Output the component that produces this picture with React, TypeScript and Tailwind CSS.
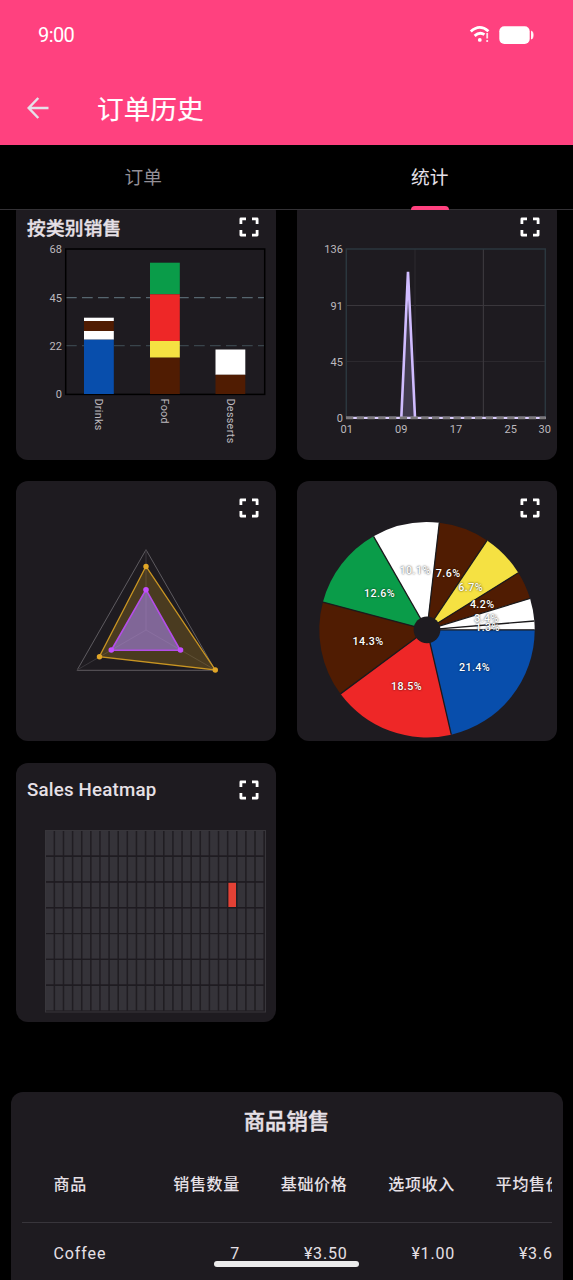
import type { ReactNode } from "react";
import clsx from "clsx";

const BROWN = "#501c02";
const YELLOW = "#f5e142";
const RED = "#ee2727";
const GREEN = "#0a9c49";
const BLUE = "#084eac";
const SURFACE = "#1e1b20";

type Segment = { top: number; bottom: number; color: string };

const bars: { label: string; x: number; segments: Segment[] }[] = [
  {
    label: "Drinks",
    x: 68,
    segments: [
      { top: 117.7, bottom: 121, color: "#fff" },
      { top: 121, bottom: 131, color: BROWN },
      { top: 131, bottom: 139.7, color: "#fff" },
      { top: 139.7, bottom: 194, color: BLUE },
    ],
  },
  {
    label: "Food",
    x: 134,
    segments: [
      { top: 62.7, bottom: 94.3, color: GREEN },
      { top: 94.3, bottom: 141, color: RED },
      { top: 141, bottom: 157.7, color: YELLOW },
      { top: 157.7, bottom: 194, color: BROWN },
    ],
  },
  {
    label: "Desserts",
    x: 199.5,
    segments: [
      { top: 149.5, bottom: 174.8, color: "#fff" },
      { top: 174.8, bottom: 194, color: BROWN },
    ],
  },
];

const slices = [
  { value: 21.4, color: BLUE },
  { value: 18.5, color: RED },
  { value: 14.3, color: BROWN },
  { value: 12.6, color: GREEN },
  { value: 10.1, color: "#fff" },
  { value: 7.6, color: BROWN },
  { value: 6.7, color: YELLOW },
  { value: 4.2, color: BROWN },
  { value: 3.4, color: "#fff" },
  { value: 1.3, color: "#fff" },
];

const columns = ["销售数量", "基础价格", "选项收入", "平均售价"];
const rows = [{ name: "Coffee", cells: ["7", "¥3.50", "¥1.00", "¥3.64"] }];

function FullscreenIcon() {
  return (
    <svg
      className="h-5 w-5 shrink-0"
      viewBox="0 0 20 20"
      fill="none"
      stroke="#fff"
      strokeWidth="2.8"
      strokeLinejoin="round"
    >
      <path d="M1.9 7V1.9H7M13 1.9h5.1V7M18.1 13v5.1H13M7 18.1H1.9V13" />
    </svg>
  );
}

function ChartCard({ title, titleClassName, children }: {
  title?: string;
  titleClassName?: string;
  children: ReactNode;
}) {
  return (
    <section className="relative h-[259.6px] rounded-xl bg-[#1e1b20]">
      <svg className="absolute inset-0" width="260" height="260" viewBox="0 0 260 260">
        {children}
      </svg>
      <div className="relative flex items-start justify-between pt-[17px] pr-[17px] pl-[11px]">
        <h2
          className={clsx(
            "text-[18.7px] leading-5 font-medium tracking-[0.2px] text-[#e6e0e6]",
            titleClassName,
          )}
        >
          {title}
        </h2>
        <FullscreenIcon />
      </div>
    </section>
  );
}

function AxisLabel({ x, y, anchor = "end", children }: {
  x: number;
  y: number;
  anchor?: "end" | "middle";
  children: ReactNode;
}) {
  return (
    <text x={x} y={y + 4} textAnchor={anchor} className="fill-[#bdb9be] text-[11px] tracking-[0.1px]">
      {children}
    </text>
  );
}

function CategoryChart() {
  return (
    <>
      <path d="M50 97.7H249" stroke="#56666f" strokeWidth="1.2" strokeDasharray="10.7 5.3" />
      <path d="M50 145.7H249" stroke="#39444b" strokeWidth="1.2" strokeDasharray="10.7 5.3" />
      <rect x="49.7" y="49" width="199" height="145.4" fill="none" stroke="#000" strokeWidth="1.5" />
      {bars.map((bar) => (
        <g key={bar.label}>
          {bar.segments.map((s) => (
            <rect key={s.top} x={bar.x} y={s.top} width="29.8" height={s.bottom - s.top} fill={s.color} />
          ))}
          <text
            transform={`translate(${bar.x + 11} 198.5) rotate(90)`}
            className="fill-[#bdb9be] text-[10.7px] tracking-[0.35px]"
          >
            {bar.label}
          </text>
        </g>
      ))}
      <AxisLabel x={46} y={49}>68</AxisLabel>
      <AxisLabel x={46} y={97.5}>45</AxisLabel>
      <AxisLabel x={46} y={145.5}>22</AxisLabel>
      <AxisLabel x={46} y={193.5}>0</AxisLabel>
    </>
  );
}

function DailyChart() {
  return (
    <>
      <g stroke="#3a373c" strokeWidth="1.2">
        <path d="M49 105.5H248" />
        <path d="M49 161.5H248" stroke="#2c292e" />
        <path d="M118 49V218" stroke="#2b292d" />
        <path d="M186.4 49V218" />
      </g>
      <rect x="49.3" y="49" width="199" height="168.7" fill="none" stroke="#2b373e" strokeWidth="1.5" />
      <path d="M104.3 217.7 111 71.7l7 146Z" fill="#403a4d" />
      <path
        d="M104.3 217.7L111 71.8l7 145.9"
        fill="none"
        stroke="#d0bcff"
        strokeWidth="2.6"
        strokeLinejoin="bevel"
      />
      {/* zero line: grey axis with the series showing through the gaps */}
      <path d="M49 217.8H248.7" stroke="#dccdff" strokeWidth="2.2" />
      <path d="M49 217.8H248.7" stroke="#7b787a" strokeWidth="2.8" strokeDasharray="7.3 3.45" />
      <AxisLabel x={46} y={49}>136</AxisLabel>
      <AxisLabel x={46} y={105.5}>91</AxisLabel>
      <AxisLabel x={46} y={161.5}>45</AxisLabel>
      <AxisLabel x={46} y={217.5}>0</AxisLabel>
      <AxisLabel x={49.7} y={229.3} anchor="middle">01</AxisLabel>
      <AxisLabel x={104.3} y={229.3} anchor="middle">09</AxisLabel>
      <AxisLabel x={159} y={229.3} anchor="middle">17</AxisLabel>
      <AxisLabel x={213.7} y={229.3} anchor="middle">25</AxisLabel>
      <AxisLabel x={247.8} y={229.3} anchor="middle">30</AxisLabel>
    </>
  );
}

function RadarChart() {
  return (
    <>
      <path d="M130 68.7 199.3 189.3H61Z" fill="none" stroke="#5e5b60" />
      <path d="M130 149V69M130 149l69.3 40M130 149l-69 40" stroke="#3a373c" />
      <path d="M130 85.3 199.3 189 83.3 175.7Z" fill="#daa520" fillOpacity="0.24" stroke="#c99522" strokeWidth="1.3" />
      <path d="M130 108.7 164.3 169.3H95.3Z" fill="#a584e8" fillOpacity="0.6" stroke="#b44de8" strokeWidth="1.6" />
      <g fill="#e0a526">
        <circle cx="130" cy="85.5" r="2.7" />
        <circle cx="199.3" cy="189" r="2.7" />
        <circle cx="83.5" cy="175.7" r="2.7" />
      </g>
      <g fill="#c44dff">
        <circle cx="130" cy="108.8" r="2.8" />
        <circle cx="164.5" cy="169" r="2.8" />
        <circle cx="95.3" cy="169" r="2.8" />
      </g>
    </>
  );
}

function PieChart() {
  const cx = 130;
  const cy = 148.8;
  const r = 107.7;
  const total = slices.reduce((sum, s) => sum + s.value, 0);
  let acc = 0;
  const arcs = slices.map((s) => {
    const start = (acc / total) * Math.PI * 2;
    acc += s.value;
    const end = (acc / total) * Math.PI * 2;
    return { ...s, start, end, mid: (start + end) / 2 };
  });
  const point = (angle: number, radius: number) =>
    `${cx + Math.cos(angle) * radius} ${cy + Math.sin(angle) * radius}`;

  return (
    <>
      {arcs.map((a) => (
        <path
          key={a.value}
          d={`M${cx} ${cy}L${point(a.start, r)}A${r} ${r} 0 0 1 ${point(a.end, r)}Z`}
          fill={a.color}
        />
      ))}
      {arcs.map((a) => (
        <path key={a.value} d={`M${cx} ${cy}L${point(a.start, r)}`} stroke="#1b1a1c" strokeWidth="1.3" />
      ))}
      <circle cx={cx} cy={cy} r="13.4" fill={SURFACE} />
      {arcs.map((a) => (
        <text
          key={a.value}
          x={cx + Math.cos(a.mid) * 60.3 + 0.3}
          y={cy + Math.sin(a.mid) * 60.3 + 3.5}
          textAnchor="middle"
          className="fill-white text-[10.7px] font-medium tracking-[0.4px] [text-shadow:0_0_2px_rgba(0,0,0,0.85)]"
        >
          {a.value}%
        </text>
      ))}
    </>
  );
}

function Heatmap() {
  const cells = Array.from({ length: 7 * 24 }, (_, i) => ({ row: Math.floor(i / 24), col: i % 24 }));
  return (
    <>
      <rect x="29.5" y="67.5" width="220" height="181.5" fill="#201d22" stroke="#38363b" />
      {cells.map(({ row, col }) => (
        <rect
          key={`${row}-${col}`}
          x={30 + col * 9.12}
          y={68 + row * 25.8}
          width="7.6"
          height="24.6"
          fill={row === 2 && col === 20 ? "#e34135" : "#353339"}
        />
      ))}
      {[1, 2, 3, 4, 5, 6].map((n) => (
        <path key={n} d={`M30 ${67.3 + n * 25.8}H248`} stroke={SURFACE} strokeWidth="1.2" />
      ))}
    </>
  );
}

function StatusBar() {
  return (
    <div className="flex h-[70px] items-center justify-between pr-[36px] pl-[38px]">
      <span className="text-[20px] leading-none tracking-[-0.6px] text-white">9:00</span>
      <svg className="overflow-visible" width="68" height="22" viewBox="0 0 68 22" fill="none">
        <path d="M1.8 7.6Q10.5-.6 19.4 7.2" stroke="#fff" strokeWidth="2.8" />
        <path d="M5.6 11.9q5.2-4.7 9.8-1.2" stroke="#fff" strokeWidth="2.8" />
        <circle cx="10.8" cy="15.9" r="1.9" fill="#fff" />
        <path d="M18.2 9v5.4M18.2 16v2" stroke="#ffdce8" strokeWidth="1.8" />
        <rect x="30.3" y="2.2" width="30.4" height="17.8" rx="5" fill="#fff" />
        <path d="M62.6 7.2c1.9.6 1.9 7.2 0 7.8Z" fill="#fff" stroke="#fff" strokeWidth="1" />
      </svg>
    </div>
  );
}

export default function App() {
  return (
    <div className="relative flex h-[1280px] w-[573px] flex-col overflow-hidden bg-black font-['Roboto','Noto_Sans_CJK_SC',sans-serif]">
      <header className="h-[145px] shrink-0 bg-[#ff417f]">
        <StatusBar />
        <div className="flex h-[75px] items-center pl-[27px]">
          <svg width="22" height="22" viewBox="0 0 22 22" fill="none" stroke="#e6e0e9" strokeWidth="2.5">
            <path d="M21.5 11H1.7M11.3 1 1.7 11l9.6 10" />
          </svg>
          <h1 className="ml-[48px] pt-[5px] text-[26.7px] leading-none text-white [-webkit-text-stroke:0.2px]">
            订单历史
          </h1>
        </div>
      </header>

      <nav className="grid h-[65px] shrink-0 grid-cols-2 border-b border-[#333135] text-[18.7px]">
        <button type="button" className="flex items-center justify-center pt-[3px] text-[#938f96]">
          订单
        </button>
        <button type="button" className="relative flex items-center justify-center pt-[3px] text-[#e6e0e9]">
          统计
          <span className="absolute -bottom-px h-1 w-[38px] rounded-t bg-[#ff417f]" />
        </button>
      </nav>

      <main className="min-h-0 flex-1 overflow-hidden">
        <div className="-mt-[10px] grid grid-cols-[260px_260px] gap-x-[21px] gap-y-[21.8px] pl-4">
          <ChartCard title="按类别销售" titleClassName="pt-0.5 [-webkit-text-stroke:0.4px]">
            <CategoryChart />
          </ChartCard>
          <ChartCard>
            <DailyChart />
          </ChartCard>
          <ChartCard>
            <RadarChart />
          </ChartCard>
          <ChartCard>
            <PieChart />
          </ChartCard>
          <ChartCard title="Sales Heatmap">
            <Heatmap />
          </ChartCard>
        </div>

        <section className="mx-[10.5px] mt-[70px] h-[220px] rounded-t-xl bg-[#1e1b20] px-[11px] pt-[17px] text-[#e6e0e6]">
          <h2 className="text-center text-[21.4px] leading-[26px] font-medium [-webkit-text-stroke:0.4px]">
            商品销售
          </h2>
          <div className="mt-[11px] overflow-hidden">
            <table className="w-[541px] table-fixed text-base tracking-[0.5px]">
              <thead>
                <tr className="h-[76px] border-b border-[#38353b]">
                  <th className="w-[111px] pt-0.5 pl-8 text-left font-medium tracking-[0.7px]">商品</th>
                  {columns.map((c) => (
                    <th
                      key={c}
                      className="w-[107.5px] pt-0.5 text-right font-medium tracking-[0.7px] whitespace-nowrap"
                    >
                      {c}
                    </th>
                  ))}
                </tr>
              </thead>
              <tbody>
                {rows.map((row) => (
                  <tr key={row.name} className="h-[62px]">
                    <td className="pl-8 tracking-[0.9px]">{row.name}</td>
                    {row.cells.map((cell) => (
                      <td key={cell} className="text-right tracking-[0.8px]">{cell}</td>
                    ))}
                  </tr>
                ))}
              </tbody>
            </table>
          </div>
        </section>
      </main>

      <div className="absolute bottom-[13px] left-[214px] h-[6px] w-[145px] rounded-full bg-[#ececec]" />
    </div>
  );
}
